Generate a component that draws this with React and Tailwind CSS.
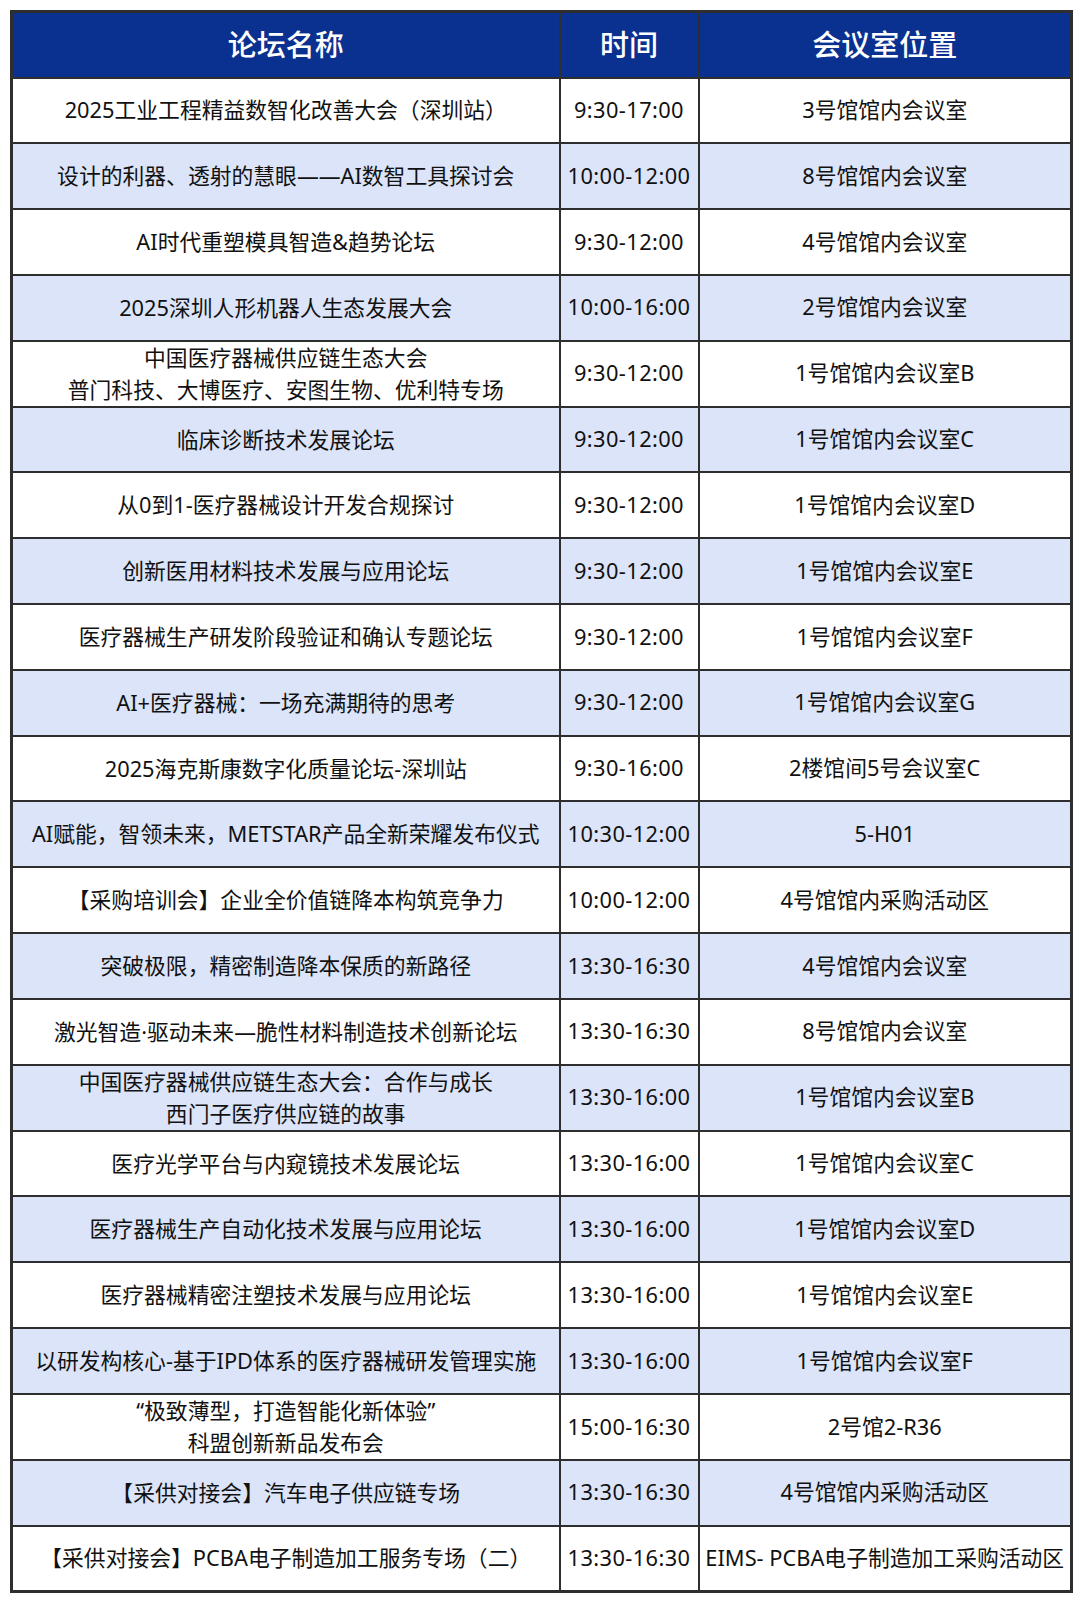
const rows = [
  [['2025工业工程精益数智化改善大会（深圳站）'], '9:30-17:00', '3号馆馆内会议室'],
  [['设计的利器、透射的慧眼——AI数智工具探讨会'], '10:00-12:00', '8号馆馆内会议室'],
  [['AI时代重塑模具智造&趋势论坛'], '9:30-12:00', '4号馆馆内会议室'],
  [['2025深圳人形机器人生态发展大会'], '10:00-16:00', '2号馆馆内会议室'],
  [['中国医疗器械供应链生态大会', '普门科技、大博医疗、安图生物、优利特专场'], '9:30-12:00', '1号馆馆内会议室B'],
  [['临床诊断技术发展论坛'], '9:30-12:00', '1号馆馆内会议室C'],
  [['从0到1-医疗器械设计开发合规探讨'], '9:30-12:00', '1号馆馆内会议室D'],
  [['创新医用材料技术发展与应用论坛'], '9:30-12:00', '1号馆馆内会议室E'],
  [['医疗器械生产研发阶段验证和确认专题论坛'], '9:30-12:00', '1号馆馆内会议室F'],
  [['AI+医疗器械：一场充满期待的思考'], '9:30-12:00', '1号馆馆内会议室G'],
  [['2025海克斯康数字化质量论坛-深圳站'], '9:30-16:00', '2楼馆间5号会议室C'],
  [['AI赋能，智领未来，METSTAR产品全新荣耀发布仪式'], '10:30-12:00', '5-H01'],
  [['【采购培训会】企业全价值链降本构筑竞争力'], '10:00-12:00', '4号馆馆内采购活动区'],
  [['突破极限，精密制造降本保质的新路径'], '13:30-16:30', '4号馆馆内会议室'],
  [['激光智造·驱动未来—脆性材料制造技术创新论坛'], '13:30-16:30', '8号馆馆内会议室'],
  [['中国医疗器械供应链生态大会：合作与成长', '西门子医疗供应链的故事'], '13:30-16:00', '1号馆馆内会议室B'],
  [['医疗光学平台与内窥镜技术发展论坛'], '13:30-16:00', '1号馆馆内会议室C'],
  [['医疗器械生产自动化技术发展与应用论坛'], '13:30-16:00', '1号馆馆内会议室D'],
  [['医疗器械精密注塑技术发展与应用论坛'], '13:30-16:00', '1号馆馆内会议室E'],
  [['以研发构核心-基于IPD体系的医疗器械研发管理实施'], '13:30-16:00', '1号馆馆内会议室F'],
  [['“极致薄型，打造智能化新体验”', '科盟创新新品发布会'], '15:00-16:30', '2号馆2-R36'],
  [['【采供对接会】汽车电子供应链专场'], '13:30-16:30', '4号馆馆内采购活动区'],
  [['【采供对接会】PCBA电子制造加工服务专场（二）'], '13:30-16:30', 'EIMS- PCBA电子制造加工采购活动区'],
];

const App = () => {
  return (
    <div className="bg-white w-[1080px] h-[1601px] pt-[10px] pl-[10px] font-['Noto_Sans','Noto_Sans_CJK_SC',sans-serif]">
      <table className="w-[1060px] table-fixed border-collapse border-[3px] border-[#2e2e2e] text-center text-[#111]">
        <colgroup>
          <col className="w-[548px]" />
          <col className="w-[139px]" />
          <col className="w-[373px]" />
        </colgroup>
        <thead>
          <tr className="h-[66px] bg-[#0b3190] text-white text-[29px]">
            <th className="border-2 border-[#2e2e2e] font-medium">论坛名称</th>
            <th className="border-2 border-[#2e2e2e] font-medium">时间</th>
            <th className="border-2 border-[#2e2e2e] font-medium">会议室位置</th>
          </tr>
        </thead>
        <tbody className="text-[21.8px]">
          {rows.map((r, i) => (
            <tr key={i} className={`h-[65.8px] ${i % 2 === 1 ? 'bg-[#dbe4f8]' : 'bg-white'}`}>
              <td className="border-2 border-[#2e2e2e] leading-[32px] whitespace-nowrap">
                {r[0].map((l, j) => <div key={j}>{l}</div>)}
              </td>
              <td className="border-2 border-[#2e2e2e] whitespace-nowrap tracking-[0.4px]">{r[1]}</td>
              <td className="border-2 border-[#2e2e2e] whitespace-nowrap">{r[2]}</td>
            </tr>
          ))}
        </tbody>
      </table>
    </div>
  );
};

export default App;
